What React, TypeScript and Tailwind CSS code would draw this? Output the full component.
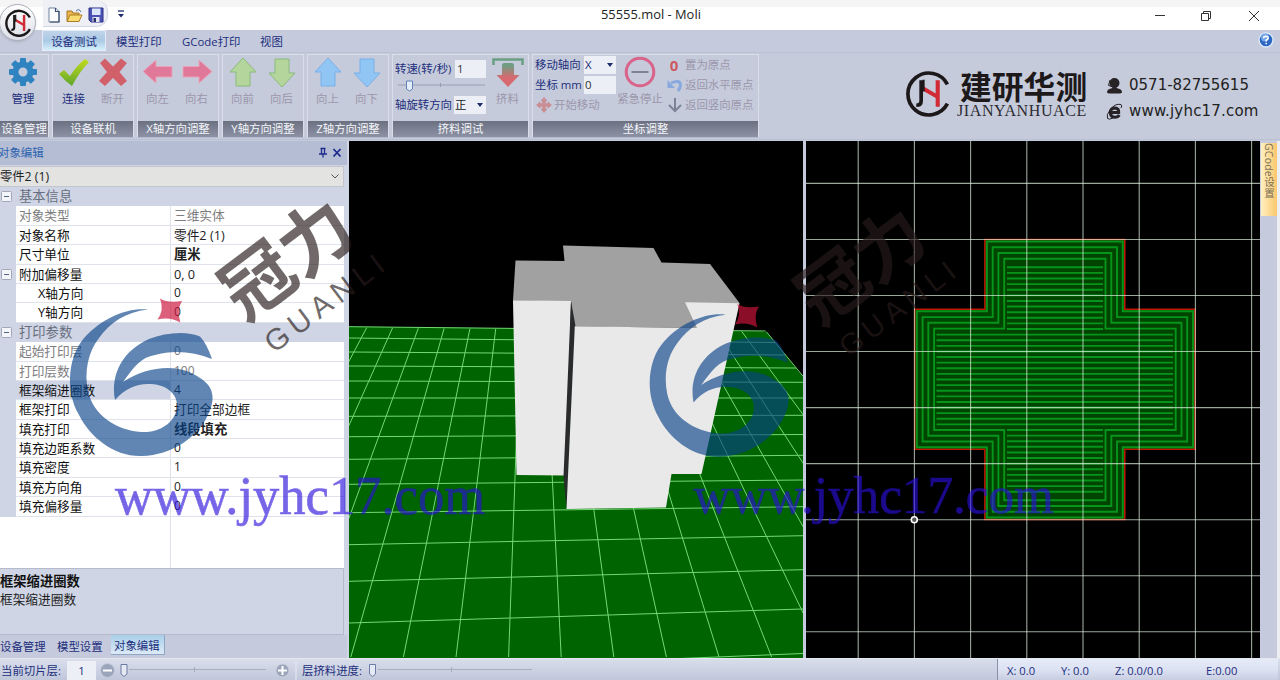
import React from "react";

const ui = "font-['Open_Sans','Noto_Sans_CJK_SC',sans-serif]";

function JhLogo({ size, thin = false }: { size: number; thin?: boolean }) {
  return (
    <svg width={size} height={size} viewBox="0 0 46 46" className="shrink-0">
      <path d="M42.500 14A20.500 20.500 0 1 0 42.500 33" fill="none" stroke="#1d191b" strokeWidth={thin ? 4 : 3.6} />
      <path d="M16.800 10V30Q16.800 34.500 12 34.500" fill="none" stroke="#1d191b" strokeWidth="3.600" />
      <path d="M19 16L31 23V10H35V36H31V27.500L19 20.500" fill="#d22a35" />
      <path d="M19.200 9.500V21" stroke="#1d191b" strokeWidth="2" />
    </svg>
  );
}

function TitleBar() {
  return (
    <header className="flex h-[30px] shrink-0 bg-gradient-to-b from-[#f5f5f5] from-[23%] to-white to-[23%]">
      <div className="ml-[43px] flex h-[27px] w-[65px] items-center gap-[5px] self-start rounded-r-[12px] border-b border-r border-[#d4d7e2] bg-[#eef0f6] pl-[4px] pt-[4px]">
        <svg width="14" height="16" viewBox="0 0 14 16">
          <path d="M2 1H8.5L12 4.5V15H2Z" fill="#fcfdff" stroke="#72839f" />
          <path d="M8.5 1V4.5H12V15H3" fill="none" stroke="#3c4f70" strokeWidth="1.2" />
        </svg>
        <svg width="17" height="15" viewBox="0 0 17 15">
          <path d="M1 3H6L7 5H13V13H1Z" fill="#e8b64c" stroke="#a57423" />
          <path d="M4 7H16L13 13.5H1Z" fill="#fbdc72" stroke="#ad7c26" />
          <path d="M10 3Q13 0 15 4" fill="none" stroke="#466a9c" />
        </svg>
        <svg width="16" height="16" viewBox="0 0 16 16">
          <path d="M1 1H15V15H3L1 13Z" fill="#4b53b5" stroke="#2b2f85" />
          <rect x="4" y="1.5" width="8.5" height="6.5" fill="#dbe5fb" />
          <rect x="4.5" y="10" width="7" height="5" fill="#e3e7f3" />
          <rect x="5.5" y="11" width="2.5" height="4" fill="#2b2f70" />
        </svg>
      </div>
      <svg width="8" height="9" viewBox="0 0 8 9" className="ml-[9px] mt-[10px]">
        <path d="M1 1H7" stroke="#1d2b6c" strokeWidth="1.3" />
        <path d="M1 4H7L4 7.5Z" fill="#1d2b6c" />
      </svg>
      <div className={`${ui} ml-[476px] mt-[6px] w-[400px] text-[12.900px] leading-[17px] text-[#222]`}>55555.mol - Moli</div>
      <svg width="110" height="14" viewBox="0 0 110 14" className="ml-[150px] mt-[9px]" fill="none" stroke="#333">
        <path d="M4 6.5H14" />
        <path d="M50.500 4.500H57.500V11.500H50.500ZM52.500 4.500V2.500H59.500V9.500H57.500" />
        <path d="M98 2L108 12M108 2L98 12" />
      </svg>
    </header>
  );
}

function TabRow() {
  return (
    <nav className={`${ui} flex h-[22px] shrink-0 bg-[#c5cbdd] text-[11.4px] leading-[21px] text-[#222e7c]`}>
      <div className="ml-[42px] flex h-[21px] w-[64px] items-center justify-center border border-[#e4ebf5] bg-gradient-to-b from-[#c1d4e8] via-[#a9c9e5] to-[#d5f0fb] pt-px">设备测试</div>
      <div className="ml-[10px] mt-[1px] w-[48px] whitespace-nowrap">模型打印</div>
      <div className="ml-[18px] mt-[1px] w-[60px] whitespace-nowrap">GCode打印</div>
      <div className="ml-[18px] mt-[1px] whitespace-nowrap">视图</div>
      <svg width="16" height="16" viewBox="0 0 16 16" className="ml-auto mr-[6px] mt-[2px]">
        <circle cx="8" cy="8" r="7" fill="#2c67c3" stroke="#dbe9fa" strokeWidth="1.4" />
        <circle cx="7" cy="5.500" r="4" fill="#76a8e8" />
        <path d="M5.600 6.300Q5.700 4.200 8 4.200Q10.300 4.300 10.200 6.200Q10 7.400 8.200 8.200V9.600M8.200 10.800V12.200" fill="none" stroke="#fff" strokeWidth="1.500" />
      </svg>
    </nav>
  );
}

function Group({ title, width, children }: { title: string; width: string; children: React.ReactNode }) {
  return (
    <section className={`${width} flex h-[84px] shrink-0 flex-col border border-[#d9deea] border-b-[#b3bacd]`}>
      <div className="flex h-[66px] min-w-0">{children}</div>
      <div className="h-[16px] overflow-hidden whitespace-nowrap bg-gradient-to-b from-[#6c7182] to-[#8c92a4] text-center text-[11.4px] leading-[16px] text-[#f4f6fa]">{title}</div>
    </section>
  );
}

function Tool({ label, on = false, width = "w-[39px]", children }: { label: string; on?: boolean; width?: string; children: React.ReactNode }) {
  return (
    <div className={`${width} flex shrink-0 flex-col items-center`}>
      <svg width="32" height="32" viewBox="0 0 32 32" className="mt-[1px] shrink-0">{children}</svg>
      <span className={`${on ? "text-[#222e7c]" : "text-[#9c96ab]"} mt-[3px] whitespace-nowrap text-[11.4px] leading-[16px]`}>{label}</span>
    </div>
  );
}

const arrowUp = "M16 2L29 16H23V30H9V16H3Z";
const arrowDown = "M16 31L29 17H23V3H9V17H3Z";

function Ribbon() {
  return (
    <div className={`${ui} flex h-[88px] shrink-0 border-b border-t border-[#b9c1d3] bg-[#c5cbdb] pt-[1px]`}>
      <div className="ml-[-1px] flex gap-[3px]">
        <Group title="设备管理" width="w-[50px]">
          <Tool label="管理" on width="w-[46px]">
            <g transform="translate(16 16)" fill="#2e83c0">
              {[0, 45, 90, 135, 180, 225, 270, 315].map((a) => (
                <rect key={a} x="-3" y="-14" width="6" height="7" rx="1" transform={`rotate(${a})`} />
              ))}
              <circle r="7.500" fill="none" stroke="#2e83c0" strokeWidth="6" />
            </g>
          </Tool>
        </Group>
        <Group title="设备联机" width="w-[82px]">
          <Tool label="连接" on width="w-[41px]">
            <defs>
              <linearGradient id="tick" x1="0" y1="0" x2="0" y2="1">
                <stop offset="0" stopColor="#c3dc1b" />
                <stop offset="1" stopColor="#5fa62f" />
              </linearGradient>
            </defs>
            <path d="M1 18L6 14L12 20Q19 9 27 3L31 6Q22 15 14 30Q7 25 1 18Z" fill="url(#tick)" />
          </Tool>
          <Tool label="断开" width="w-[37px]">
            <path d="M3 7L8 2.500L16 10.500L24 2.500L30 7L22.500 16L30 25L24 30L16 22L8 30L2 25L10 16Z" fill="#d2606b" />
          </Tool>
        </Group>
        <Group title="X轴方向调整" width="w-[82px]">
          <Tool label="向左"><path d="M1 15.500L14 4V10.500H30V21H14V27Z" fill="#e0789a" stroke="#e9a4ba" /></Tool>
          <Tool label="向右"><path d="M31 15.500L18 4V10.500H2V21H18V27Z" fill="#e0789a" stroke="#e9a4ba" /></Tool>
        </Group>
        <Group title="Y轴方向调整" width="w-[82px]">
          <Tool label="向前"><path d={arrowUp} fill="#b4d69c" stroke="#8aba7a" /></Tool>
          <Tool label="向后"><path d={arrowDown} fill="#b4d69c" stroke="#8aba7a" /></Tool>
        </Group>
        <Group title="Z轴方向调整" width="w-[82px]">
          <Tool label="向上"><path d={arrowUp} fill="#91c6f4" stroke="#79afe8" /></Tool>
          <Tool label="向下"><path d={arrowDown} fill="#91c6f4" stroke="#79afe8" /></Tool>
        </Group>
        <Group title="挤料调试" width="w-[137px]">
          <div className="w-[95px] shrink-0 pl-[2px] pt-[4px] text-[11.4px] text-[#222e7c]">
            <div className="flex h-[19px] items-center whitespace-nowrap">
              <span className="w-[60px]">转速(转/秒)</span>
              <span className="h-[18px] w-[31px] bg-[#eceff5] pl-[2px] leading-[18px] text-[#333]">1</span>
            </div>
            <svg width="92" height="16" viewBox="0 0 92 16" className="block">
              <path d="M3 7H90M45.500 5V9" stroke="#979eb0" fill="none" />
              <path d="M11.500 3H17.500V11L14.500 13L11.500 11Z" fill="#e4edfa" stroke="#6282b8" />
            </svg>
            <div className="mt-[1px] flex h-[19px] items-center whitespace-nowrap">
              <span className="w-[59px]">轴旋转方向</span>
              <span className="flex h-[18px] w-[32px] items-center bg-[#eceff5] pl-[1px] text-[#222]">
                正
                <svg width="6" height="4" viewBox="0 0 6 4" className="ml-auto mr-[3px]"><path d="M0 0H6L3 4Z" fill="#1d2b6c" /></svg>
              </span>
            </div>
          </div>
          <Tool label="挤料">
            <defs>
              <linearGradient id="ext" x1="0" y1="0" x2="0" y2="1">
                <stop offset="0.1" stopColor="#6f9d82" />
                <stop offset="0.6" stopColor="#d66a70" />
              </linearGradient>
            </defs>
            <path d="M1.500 9V3.500H30.500V9" fill="none" stroke="#6aa081" strokeWidth="2.500" />
            <path d="M10 9Q10 7 12 7H20Q22 7 22 9V19H27.500L16 31L4.500 19H10Z" fill="url(#ext)" />
          </Tool>
        </Group>
        <Group title="坐标调整" width="w-[227px]">
          <div className="w-[84px] shrink-0 pl-[2px] text-[11.4px] text-[#222e7c]">
            <div className="flex h-[20px] items-center whitespace-nowrap">
              <span className="w-[49px]">移动轴向</span>
              <span className="flex h-[18px] w-[32px] items-center bg-[#eceff5] pl-[1px]">
                X
                <svg width="6" height="4" viewBox="0 0 6 4" className="ml-auto mr-[3px]"><path d="M0 0H6L3 4Z" fill="#1d2b6c" /></svg>
              </span>
            </div>
            <div className="flex h-[20px] items-center whitespace-nowrap">
              <span className="w-[49px]">坐标 mm</span>
              <span className="h-[18px] w-[32px] bg-[#eceff5] pl-[1px] leading-[18px] text-[#333]">0</span>
            </div>
            <div className="flex h-[20px] items-center gap-[2px] whitespace-nowrap text-[#9c96ab]">
              <svg width="16" height="16" viewBox="0 0 16 16" className="ml-[1px] shrink-0">
                <path d="M8 0.500L11 4H9.300V6.700H12V5L15.500 8L12 11V9.300H9.300V12H11L8 15.500L5 12H6.700V9.300H4V11L0.500 8L4 5V6.700H6.700V4H5Z" fill="#cd8e94" stroke="#c07b82" strokeWidth="0.500" />
              </svg>
              开始移动
            </div>
          </div>
          <Tool label="紧急停止" width="w-[46px]">
            <circle cx="16" cy="16" r="13.800" fill="none" stroke="#d9638b" strokeWidth="3" />
            <path d="M7.500 16H24.500" stroke="#7f8293" strokeWidth="2" />
          </Tool>
          <div className="flex flex-col pl-[4px] text-[11.4px] text-[#9c96ab]">
            <div className="flex h-[20px] items-center whitespace-nowrap">
              <span className="mr-[4px] w-[14px] text-center text-[15px] font-bold leading-none text-[#cb5b61]">0</span>
              置为原点
            </div>
            <div className="flex h-[20px] items-center whitespace-nowrap">
              <svg width="16" height="15" viewBox="0 0 16 15" className="mr-[2px]">
                <path d="M4 5Q13 1 13.500 7Q13.500 10 11 13" fill="none" stroke="#87a9dd" strokeWidth="3" />
                <path d="M0.500 2V10H8Z" fill="#87a9dd" />
              </svg>
              返回水平原点
            </div>
            <div className="flex h-[20px] items-center whitespace-nowrap">
              <svg width="16" height="16" viewBox="0 0 16 16" className="mr-[2px]">
                <path d="M8 1V14M2 8L8 14L14 8" fill="none" stroke="#7b8395" strokeWidth="2" />
              </svg>
              返回竖向原点
            </div>
          </div>
        </Group>
      </div>
      <div className="ml-[145px] flex pt-[16px]">
        <JhLogo size={47} />
        <div className="ml-[6px] mt-[-1px] w-[145px]">
          <div className="pl-[3px] font-['Noto_Sans_CJK_SC',sans-serif] text-[31.800px] font-bold leading-[32px] text-[#1d191b]">建研华测</div>
          <div className="mt-[1px] font-['Liberation_Serif',serif] text-[16px] leading-[18px] tracking-[0.6px] text-[#2d2b31]">JIANYANHUACE</div>
        </div>
        <div className="ml-[4px] mt-[2px] flex flex-col font-['DejaVu_Sans',sans-serif] text-[15px] text-[#222]">
          <div className="flex h-[26px] items-center whitespace-nowrap">
            <svg width="17" height="17" viewBox="0 0 17 17" className="mr-[6px]">
              <circle cx="8.500" cy="6" r="5" fill="#262226" />
              <path d="M6.500 9H10.500V11Q16 12 16 15Q16 16.500 12 16.500H5Q1 16.500 1 15Q1 12 6.500 11Z" fill="#262226" />
              <path d="M4 3L2.500 8.500L7 10" fill="none" stroke="#262226" />
            </svg>
            0571-82755615
          </div>
          <div className="flex h-[27px] items-center whitespace-nowrap tracking-[0.200px]">
            <svg width="17" height="17" viewBox="0 0 17 17" className="mr-[6px]">
              <path d="M13.300 12Q12 14.300 8.800 14.300Q4.300 14 4.300 9.300Q4.600 5 9 5Q13 5.300 12.700 9.500H5" fill="none" stroke="#262226" strokeWidth="3" />
              <path d="M4 7Q9 0 15 1.500Q16.500 2.500 15 5M4 7Q0 12 1.500 15.500Q3 17 7 15" fill="none" stroke="#262226" />
            </svg>
            www.jyhc17.com
          </div>
        </div>
      </div>
    </div>
  );
}

type Row = { n: string; v?: string; head?: boolean; dim?: boolean; bold?: boolean; sub?: boolean; box?: boolean; sel?: boolean };
const rows: Row[] = [
  { n: "基本信息", head: true, box: true },
  { n: "对象类型", v: "三维实体", dim: true },
  { n: "对象名称", v: "零件2 (1)" },
  { n: "尺寸单位", v: "厘米", bold: true },
  { n: "附加偏移量", v: "0, 0", box: true },
  { n: "X轴方向", v: "0", sub: true },
  { n: "Y轴方向", v: "0", sub: true },
  { n: "打印参数", head: true, box: true },
  { n: "起始打印层", v: "0", dim: true },
  { n: "打印层数", v: "100", dim: true },
  { n: "框架缩进圈数", v: "4", sel: true },
  { n: "框架打印", v: "打印全部边框" },
  { n: "填充打印", v: "线段填充", bold: true },
  { n: "填充边距系数", v: "0" },
  { n: "填充密度", v: "1" },
  { n: "填充方向角", v: "0" },
  { n: "填充偏移量", v: "0" },
];

function PropertyRow({ r }: { r: Row }) {
  return (
    <div className="flex h-[19.4px] text-[12.7px] leading-[18px]">
      <div className="flex w-[16px] shrink-0 items-center bg-[#cfd5e4]">
        {r.box && (
          <svg width="11" height="11" viewBox="0 0 11 11" className="ml-[1px]">
            <rect x="0.500" y="0.500" width="10" height="10" rx="1" fill="#f4f5f9" stroke="#a2a8ba" />
            <path d="M3 5.500H8" stroke="#55648e" />
          </svg>
        )}
      </div>
      {r.head ? (
        <div className="flex-1 bg-[#cfd5e4] pl-[3px] text-[13.3px] text-[#686f80]">{r.n}</div>
      ) : (
        <>
          <div className={`${r.sub ? "pl-[22px]" : "pl-[3px]"} ${r.dim ? "text-[#7d7d80]" : "text-[#111]"} ${r.sel ? "bg-[#cfd5e4]" : "bg-white"} w-[155px] shrink-0 whitespace-nowrap border-b border-r border-[#dfe2ea]`}>{r.n}</div>
          <div className={`${r.dim ? "text-[#7d7d80]" : "text-[#222]"} ${r.bold ? "text-[13.3px] font-bold" : r.v && r.v.length < 4 ? "text-[12px]" : ""} flex-1 whitespace-nowrap border-b border-[#dfe2ea] bg-white pl-[3px]`}>{r.v}</div>
        </>
      )}
    </div>
  );
}

function LeftPanel() {
  return (
    <aside className={`${ui} flex w-[349px] shrink-0 flex-col bg-[#cfd5e4] pr-[5px]`}>
      <div className="mr-[-3px] flex h-[24px] shrink-0 items-center bg-[#b4bdd4]">
        <span className="ml-[-2px] text-[11.4px] leading-[22px] text-[#2c62ae]">对象编辑</span>
        <svg width="24" height="12" viewBox="0 0 24 12" className="ml-auto mr-[5px]" fill="none" stroke="#1d2b8c">
          <path d="M2.500 1.500H7.500M3.500 1.500V7M6.500 1.500V7M1 7H9M5 7V10.500" strokeWidth="1.300" />
          <path d="M15.500 2L22.500 9.500M22.500 2L15.500 9.500" strokeWidth="1.800" />
        </svg>
      </div>
      <div className="mt-px flex h-[21px] shrink-0 items-center border border-l-0 border-[#c3c6ce] bg-[#e3e3e2] text-[12.300px] text-[#222]">
        <span className="mt-px">零件2 (1)</span>
        <svg width="8" height="5" viewBox="0 0 8 5" className="ml-auto mr-[4px]"><path d="M0.500 0.500L4 4L7.500 0.500" fill="none" stroke="#555" /></svg>
      </div>
      <div className="flex h-[381px] shrink-0 flex-col bg-white">
        {rows.map((r) => <PropertyRow key={r.n} r={r} />)}
        <div className="w-[171px] flex-1 border-r border-[#dfe2ea]" />
      </div>
      <div className="h-[67px] shrink-0 border-b border-r border-t border-[#b5bbca] pt-[3px] text-[#111]">
        <div className="text-[13.300px] font-bold leading-[19px]">框架缩进圈数</div>
        <div className="text-[12.700px] leading-[17px] text-[#222]">框架缩进圈数</div>
      </div>
      <div className="mr-[-3px] flex h-[23px] shrink-0 items-center bg-[#c5cbdc] text-[11.400px] text-[#222e7c]">
        <span className="w-[57px]">设备管理</span>
        <span className="w-[54px]">模型设置</span>
        <span className="flex h-[20px] w-[54px] items-center self-start border-b border-r border-[#8fa5c5] bg-gradient-to-b from-[#a8cfe8] to-[#dceaf6] pl-[3px] pt-[2px]">对象编辑</span>
      </div>
    </aside>
  );
}

const hLines = [
  [326.700, 331], [338, 342.500], [352, 355], [366, 368], [381, 382.300], [398, 398], [416.300, 415.300], [436.700, 434.500],
  [459.300, 455.300], [484.300, 480], [512.700, 506.700], [544.700, 535.700], [581.300, 569.700], [623, 609], [672, 653.500],
];
const vLines = Array.from({ length: 17 }, (_, i) => {
  const k = i - 5;
  return [k < 0 ? 495.700 + 25.800 * k : 495.700 + 24.600 * k, 456 + 52.600 * k];
});

function Scene3D() {
  return (
    <svg width="454" height="517" viewBox="349 141 454 517" className="block shrink-0 bg-black">
      <path d="M349 326.500L765.700 331.300L803 377V658H349Z" fill="#006400" />
      <g stroke="#74d874" strokeWidth="1">
        {hLines.map(([a, b], i) => {
          const right = i === 0 ? 765.700 : i === 1 ? 775 : i === 2 ? 785.500 : i === 3 ? 796 : 803;
          return <line key={a} x1="349" y1={a} x2={right} y2={b} />;
        })}
        {vLines.map(([a, b]) => <line key={a} x1={a} y1={327.500 + (a - 349) * 0.010} x2={b} y2="657" />)}
      </g>
      <path d="M571 301L575.500 326L569.800 440L566.500 509L565 476L564 440Z" fill="#292b2d" />
      <path d="M563 245.500L653.500 248L661.500 262.500L710 264L739.500 303L697 328L574 326.500L571 301.500L513 300.500L515.500 260.500L564.500 261Z" fill="#a1a1a1" />
      <path d="M513 300.300L571 301L569.500 360L565 475.500L516.500 475Z" fill="#e9e9e9" />
      <path d="M571 301L575.500 326L569.800 440L566.500 509L563.500 476L566 420Z" fill="#292b2d" />
      <path d="M574.800 326.300L697 328L685 302.300L739.500 303.300L701.500 474H671.500L666 507.500L566.500 509Z" fill="#e9e9e9" />
    </svg>
  );
}

function crossPath(d: number) {
  const x0 = 914.800 + d, x1 = 984.900 + d, x2 = 1124.800 - d, x3 = 1195 - d;
  const y0 = 239.500 + d, y1 = 309.300 + d, y2 = 449.300 - d, y3 = 519.500 - d;
  return `M${x1} ${y0}H${x2}V${y1}H${x3}V${y2}H${x2}V${y3}H${x1}V${y2}H${x0}V${y1}H${x1}Z`;
}

function Slice2D() {
  const fills = Array.from({ length: 42 }, (_, i) => 267.300 + i * 5.610).filter((y) => y < 495);
  return (
    <svg width="454" height="517" viewBox="806 141 454 517" className="block shrink-0 bg-black">
      <path d={crossPath(0)} fill="#004400" stroke="#c01800" strokeWidth="1.500" />
      <g fill="none" stroke="#07941a" strokeWidth="1.900">
        {[2, 7.800, 13.500, 19.300].map((d) => <path key={d} d={crossPath(d)} />)}
        {fills.map((y) => {
          const wide = y > 330 && y < 428;
          return <path key={y} d={wide ? `M936.500 ${y}H1173` : `M1007 ${y}H1103`} />;
        })}
      </g>
      <g stroke="#e0f0e0" strokeOpacity="0.700" strokeWidth="1.100">
        {Array.from({ length: 8 }, (_, i) => 858.200 + i * 56.200).map((x) => <line key={x} x1={x} y1="141" x2={x} y2="658" />)}
        {Array.from({ length: 9 }, (_, i) => 183.400 + i * 56.050).map((y) => <line key={y} x1="806" y1={y} x2="1260" y2={y} />)}
      </g>
      <circle cx="914.300" cy="519.700" r="3" fill="#555" stroke="#fff" strokeWidth="1.600" />
    </svg>
  );
}

function RightStrip() {
  return (
    <div className="flex w-[20px] shrink-0 flex-col border-r-[3px] border-[#eceef2] bg-[#c5cbdc] pl-px pt-[2px]">
      <div className={`${ui} flex h-[73px] w-[16px] items-center bg-gradient-to-r from-[#fff0bf] to-[#fbc76a] text-[10.500px] leading-[16px] tracking-[0.200px] text-[#777058] [writing-mode:vertical-rl]`}>
        <span className="h-full whitespace-nowrap">GCode设置</span>
      </div>
    </div>
  );
}

function StatusBar() {
  return (
    <footer className={`${ui} flex h-[22px] shrink-0 border-t border-[#e4e7f0] bg-gradient-to-b from-[#d9deeb] to-[#c0c7da] text-[11.400px] leading-[24px] text-[#222e7c]`}>
      <span className="w-[67px] pl-px">当前切片层:</span>
      <span className="mt-[2px] h-[19px] w-[29px] bg-[#eceff5] text-center leading-[19px]">1</span>
      <svg width="204" height="21" viewBox="96 659 204 21" className="shrink-0">
        <circle cx="107.500" cy="670.500" r="7" fill="#9aa4ba" stroke="#c9cedb" />
        <path d="M103 670.500H112" stroke="#fff" strokeWidth="2" />
        <path d="M129 669.500H266M194.500 667V672" stroke="#a6adbd" />
        <path d="M121 664.500H127V674L124 676.500L121 674Z" fill="#e4e9f4" stroke="#6c7ba3" />
        <circle cx="282.500" cy="670.500" r="6.500" fill="#9aa4ba" stroke="#c9cedb" />
        <path d="M278 670.500H287M282.500 666V675" stroke="#fff" strokeWidth="2" />
        <path d="M296 662V680" stroke="#e9ecf4" />
      </svg>
      <span className="w-[66px] pl-[2px]">层挤料进度:</span>
      <svg width="200" height="21" viewBox="366 659 200 21" className="shrink-0">
        <path d="M378 669.500H532M451.500 667V672" stroke="#a6adbd" />
        <path d="M369.500 664.500H375.500V674L372.500 676.500L369.500 674Z" fill="#e4e9f4" stroke="#6c7ba3" />
      </svg>
      <div className="ml-auto mr-[2px] flex w-[281px] whitespace-nowrap border-l border-[#8891a6] bg-gradient-to-b from-[#e6ebf8] via-[#dde2f3] to-[#c8cee1] pl-[9px] text-[11.200px]">
        <span className="w-[54px]">X: 0.0</span>
        <span className="w-[54px]">Y: 0.0</span>
        <span className="w-[91px]">Z: 0.0/0.0</span>
        <span>E:0.00</span>
      </div>
    </footer>
  );
}

function Mark() {
  return (
    <g>
      <path
        d="M148 309.500C128 307 102 318 85 337C69 354 64 389 79 415C90 437 114 457 142 456C172 455 196 438 207 417C217 398 213 386 200 378C181 363 148 365 123 382C133 368 141 357 155 355C172 350 193 351 212 359Q207 344 200 336.500C188 331 166 332 149 339C124 350 110 373 115 400C125 388 138 383 151 384C168 385 178 395 177 407C175 424 158 433 141 432C116 430 93 415 88 391C84 372 88 352 99 338C110 323 125 312 148 309.500Z"
        fill="#084288"
        fillOpacity="0.640"
      />
      <path d="M160 298.500Q168 303.500 182 301Q176.500 310 180.300 322.500Q170 316.500 157.500 319.500Q164.500 310 160 298.500Z" fill="#cd143c" fillOpacity="0.680" />
      <g fill="#281c1c" fillOpacity="0.660">
        <text transform="translate(245 323) rotate(-37)" fontFamily="Noto Sans CJK SC, sans-serif" fontWeight="700" fontSize="72">冠力</text>
        <text transform="translate(274 354) rotate(-37)" fontFamily="Liberation Sans, sans-serif" fontSize="30" textLength="141">GUANLI</text>
      </g>
      <text x="115" y="514" fontFamily="Liberation Serif, serif" fontSize="54" textLength="370" lengthAdjust="spacingAndGlyphs" fill="#2b10dc" stroke="#2b10dc" strokeWidth="0.700" opacity="0.640">www.jyhc17.com</text>
    </g>
  );
}

export default function App() {
  return (
    <div className="relative flex h-[680px] w-[1280px] flex-col overflow-hidden bg-[#c5cbdc]">
      <TitleBar />
      <TabRow />
      <Ribbon />
      <main className="mt-px flex h-[517px] shrink-0">
        <LeftPanel />
        <Scene3D />
        <div className="w-[3px] shrink-0 bg-[#c5cbdc]" />
        <Slice2D />
        <RightStrip />
      </main>
      <StatusBar />
      <div className="absolute left-[-1px] top-[4px] flex size-[37px] items-center justify-center rounded-full border border-[#aaaeb9] bg-gradient-to-b from-white to-[#dcdfe8] shadow">
        <JhLogo size={28} thin />
      </div>
      <svg width="1280" height="680" viewBox="0 0 1280 680" className="pointer-events-none absolute left-0 top-0">
        <Mark />
        <g transform="translate(581.500 14.800) scale(0.974 0.969)">
          <Mark />
        </g>
      </svg>
    </div>
  );
}
